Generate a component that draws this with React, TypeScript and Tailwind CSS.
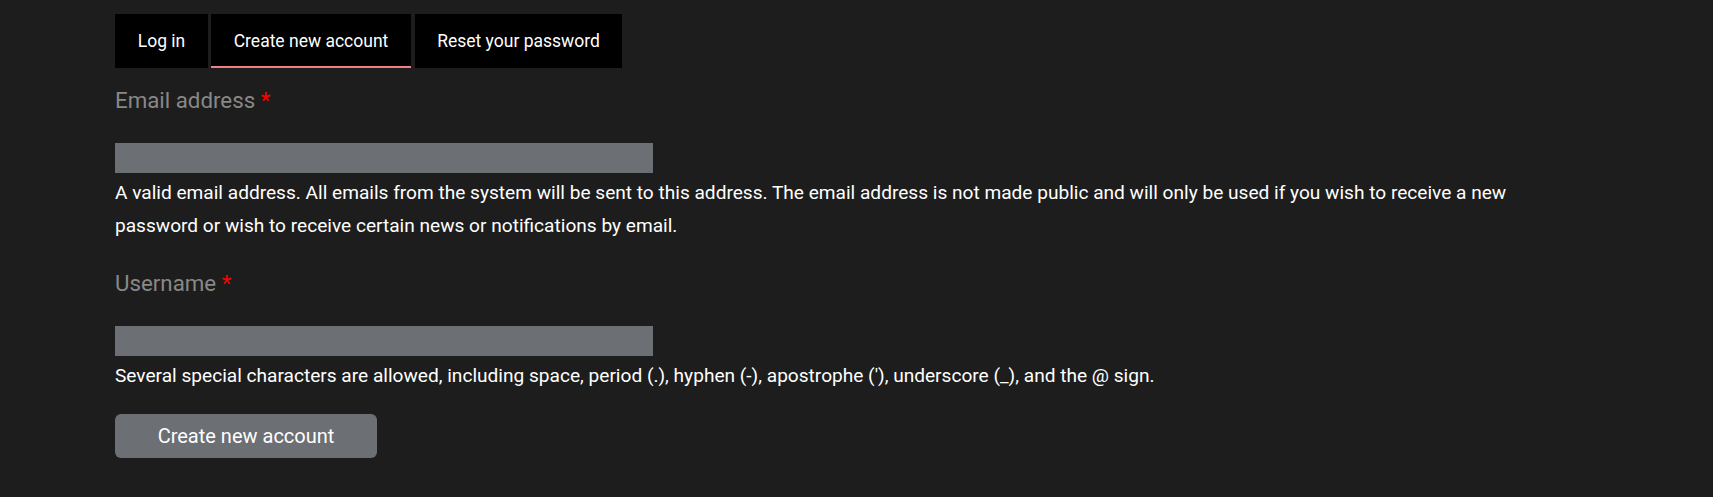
import React from "react";

export default function App() {
  const font = { fontFamily: "Roboto, 'Noto Sans', sans-serif" };
  return (
    <div
      className="min-h-[497px] w-full bg-[#1d1d1d] pl-[115px] pt-[14px] text-white"
      style={font}
    >
      <div className="flex h-[54px] items-stretch text-[17.5px]">
        <div className="flex w-[93px] items-center justify-center bg-black">Log in</div>
        <div className="ml-[3px] flex w-[200px] items-center justify-center border-b-2 border-[#f08080] bg-black pt-[2px]">
          Create new account
        </div>
        <div className="ml-[4px] flex w-[207px] items-center justify-center bg-black">
          Reset your password
        </div>
      </div>

      <div className="mt-[16px] text-[22.3px] leading-[32px] text-[#888888]">
        Email address <span className="text-[#ff0000]">*</span>
      </div>
      <div className="mt-[27px] h-[30px] w-[538px] bg-[#6c6f74]" />
      <p className="mt-[3.3px] max-w-[1440px] text-[19.1px] leading-[33px] text-white">
        A valid email address. All emails from the system will be sent to this address. The email address is not made public and will only be used if you wish to receive a new password or wish to receive certain news or notifications by email.
      </p>

      <div className="mt-[24.5px] text-[22.3px] leading-[32px] text-[#888888]">
        Username <span className="text-[#ff0000]">*</span>
      </div>
      <div className="mt-[27px] h-[30px] w-[538px] bg-[#6c6f74]" />
      <p className="mt-[3.3px] text-[19.1px] leading-[33px] text-white">
        Several special characters are allowed, including space, period (.), hyphen (-), apostrophe ('), underscore (_), and the @ sign.
      </p>

      <button className="mt-[22px] flex h-[44px] w-[262px] items-center justify-center rounded-[6px] bg-[#6c6f74] text-[20px] text-white">
        Create new account
      </button>
    </div>
  );
}
